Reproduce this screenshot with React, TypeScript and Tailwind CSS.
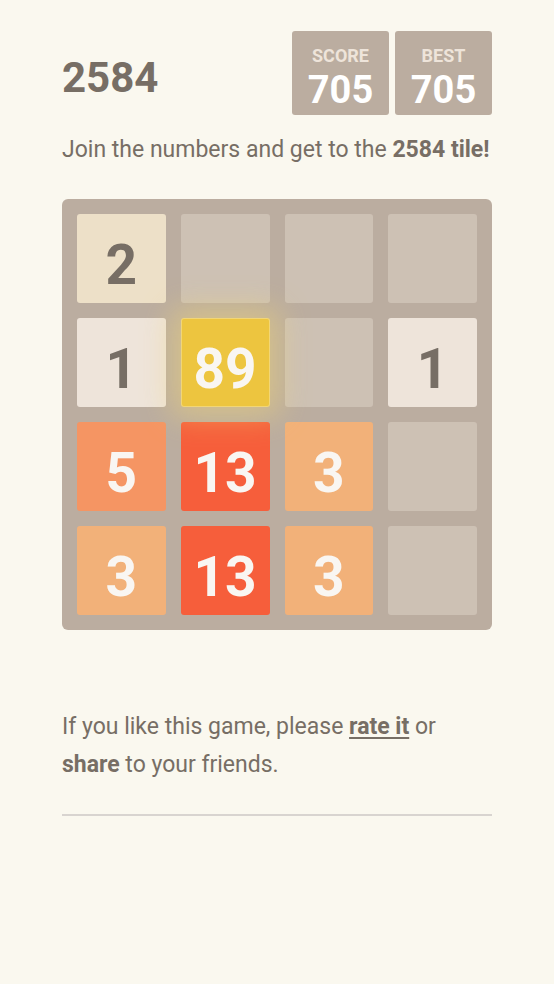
import React from "react"

const board: (number | null)[][] = [
  [2, null, null, null],
  [1, 89, null, 1],
  [5, 13, 3, null],
  [3, 13, 3, null],
]

function tileClass(v: number | null) {
  switch (v) {
    case 1:
      return "bg-[#eee4da] text-[#776e65]"
    case 2:
      return "bg-[#ede0c8] text-[#776e65]"
    case 3:
      return "bg-[#f2b179] text-[#f9f6f2]"
    case 5:
      return "bg-[#f59563] text-[#f9f6f2]"
    case 13:
      return "bg-[#f65e3b] text-[#f9f6f2]"
    case 89:
      return "bg-[#edc53f] text-[#f9f6f2] relative z-10 shadow-[0_0_30px_10px_rgba(243,215,116,0.48),inset_0_0_0_1px_rgba(255,255,255,0.29)]"
    default:
      return "bg-[#cdc1b4]"
  }
}

function ScoreBox({ label, value }: { label: string; value: number }) {
  return (
    <div className="flex flex-col items-center w-[97px] h-[84px] pt-[14px] bg-[#bbada0] rounded-[3px]">
      <span className="text-[18px] leading-[22px] font-bold text-[#eee4da] uppercase">{label}</span>
      <span className="mt-[3px] text-[38px] leading-[40px] font-bold text-white">{value}</span>
    </div>
  )
}

export default function App() {
  return (
    <div className="min-h-[984px] bg-[#faf8ef] text-[#776e65] font-['Roboto',sans-serif]">
      <div className="w-[430px] mx-auto pt-[31px]">
        {/* Header */}
        <div className="flex items-center justify-between">
          <h1 className="text-[42px] font-bold leading-none mt-[10px]">2584</h1>
          <div className="flex gap-[6px]">
            <ScoreBox label="Score" value={705} />
            <ScoreBox label="Best" value={705} />
          </div>
        </div>

        <p className="mt-[20px] text-[23px] leading-[30px] whitespace-nowrap">
          Join the numbers and get to the <strong className="font-bold">2584 tile!</strong>
        </p>

        {/* Board */}
        <div className="mt-[34px] bg-[#bbada0] rounded-[6px] p-[15px] grid grid-cols-4 gap-[15px]">
          {board.flat().map((v, i) => (
            <div
              key={i}
              className={`h-[89px] pt-[13px] rounded-[3px] flex items-center justify-center text-[55px] font-bold leading-none ${tileClass(v)}`}
            >
              {v ?? ""}
            </div>
          ))}
        </div>

        {/* Footer */}
        <p className="mt-[78px] text-[23px] leading-[38px]">
          If you like this game, please{" "}
          <a className="font-bold underline underline-offset-[3px]">rate it</a> or{" "}
          <strong className="font-bold">share</strong> to your friends.
        </p>
        <hr className="mt-[30px] border-0 border-b-2 border-[#d8d4d0]" />
      </div>
    </div>
  )
}
